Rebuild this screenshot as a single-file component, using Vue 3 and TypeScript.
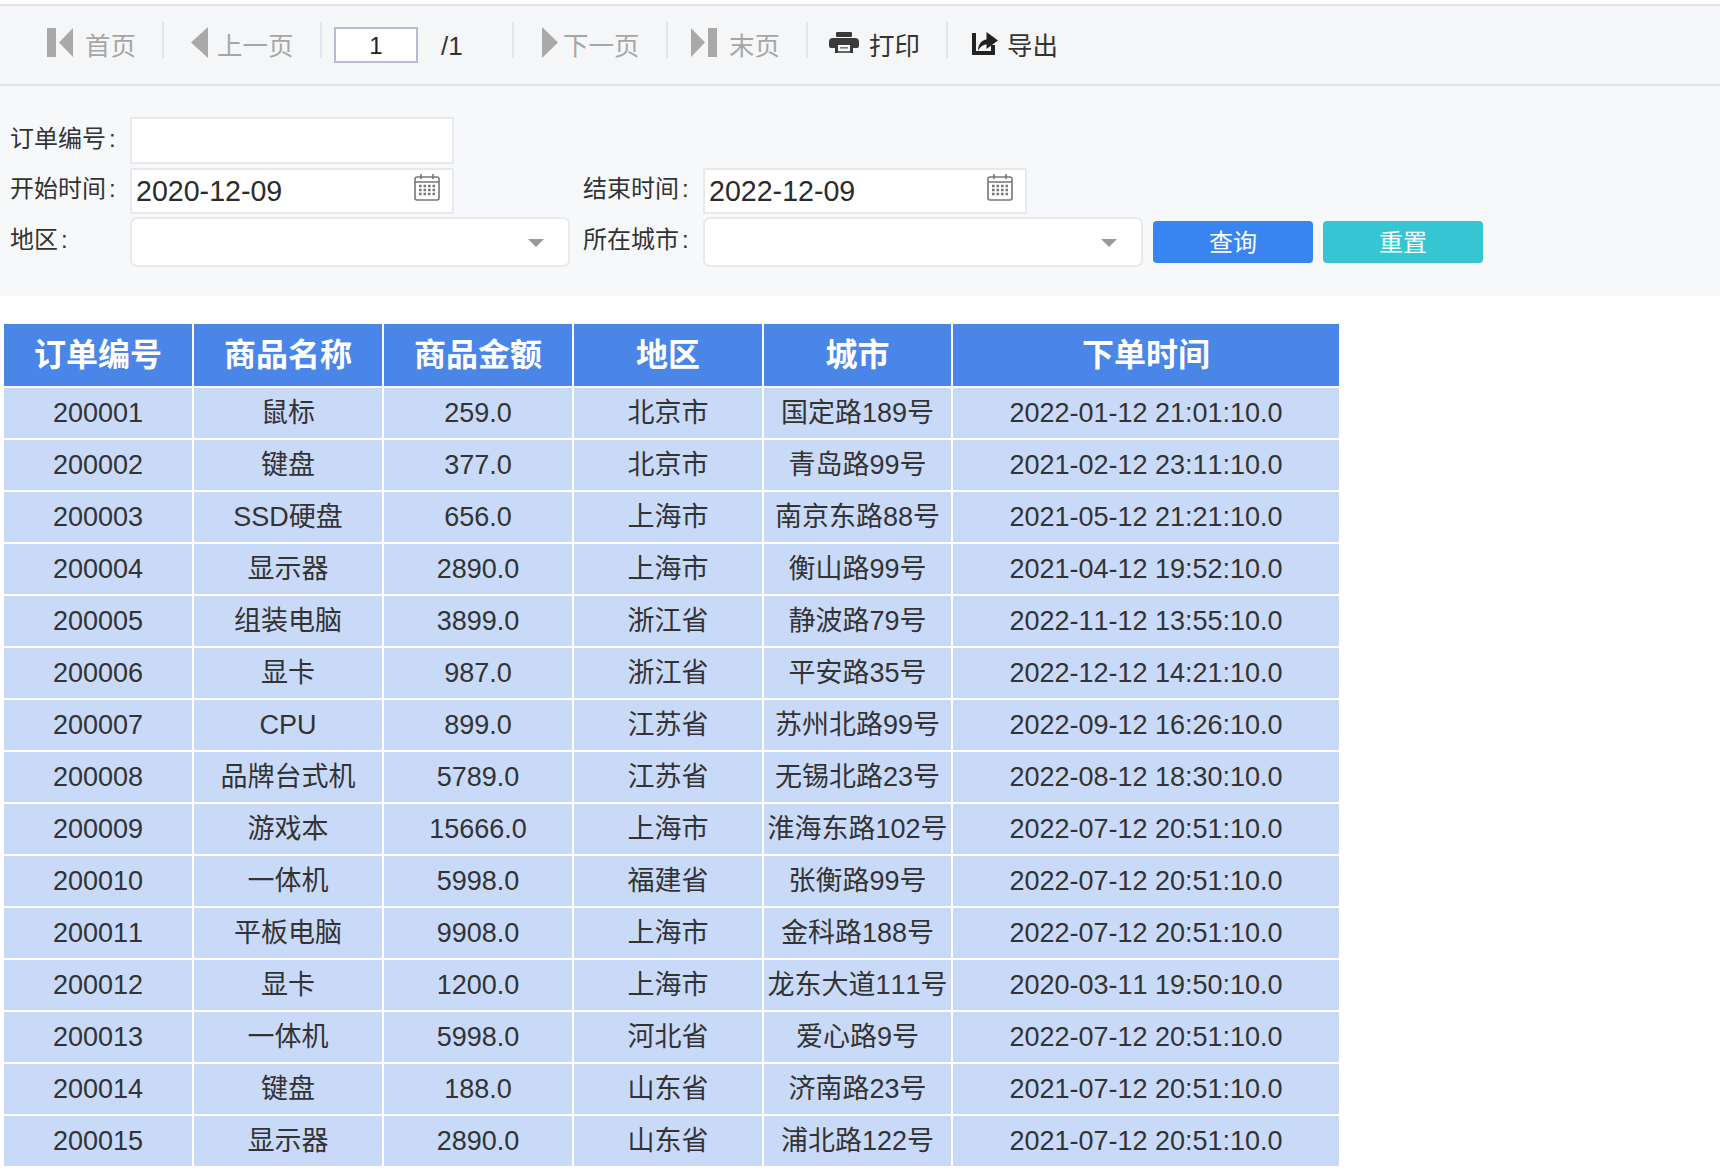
<script setup lang="ts">
interface Row { id: string; name: string; amount: string; region: string; city: string; time: string }
const headers: string[] = ['订单编号', '商品名称', '商品金额', '地区', '城市', '下单时间']
const rows: Row[] = [
  { id: '200001', name: '鼠标', amount: '259.0', region: '北京市', city: '国定路189号', time: '2022-01-12 21:01:10.0' },
  { id: '200002', name: '键盘', amount: '377.0', region: '北京市', city: '青岛路99号', time: '2021-02-12 23:11:10.0' },
  { id: '200003', name: 'SSD硬盘', amount: '656.0', region: '上海市', city: '南京东路88号', time: '2021-05-12 21:21:10.0' },
  { id: '200004', name: '显示器', amount: '2890.0', region: '上海市', city: '衡山路99号', time: '2021-04-12 19:52:10.0' },
  { id: '200005', name: '组装电脑', amount: '3899.0', region: '浙江省', city: '静波路79号', time: '2022-11-12 13:55:10.0' },
  { id: '200006', name: '显卡', amount: '987.0', region: '浙江省', city: '平安路35号', time: '2022-12-12 14:21:10.0' },
  { id: '200007', name: 'CPU', amount: '899.0', region: '江苏省', city: '苏州北路99号', time: '2022-09-12 16:26:10.0' },
  { id: '200008', name: '品牌台式机', amount: '5789.0', region: '江苏省', city: '无锡北路23号', time: '2022-08-12 18:30:10.0' },
  { id: '200009', name: '游戏本', amount: '15666.0', region: '上海市', city: '淮海东路102号', time: '2022-07-12 20:51:10.0' },
  { id: '200010', name: '一体机', amount: '5998.0', region: '福建省', city: '张衡路99号', time: '2022-07-12 20:51:10.0' },
  { id: '200011', name: '平板电脑', amount: '9908.0', region: '上海市', city: '金科路188号', time: '2022-07-12 20:51:10.0' },
  { id: '200012', name: '显卡', amount: '1200.0', region: '上海市', city: '龙东大道111号', time: '2020-03-11 19:50:10.0' },
  { id: '200013', name: '一体机', amount: '5998.0', region: '河北省', city: '爱心路9号', time: '2022-07-12 20:51:10.0' },
  { id: '200014', name: '键盘', amount: '188.0', region: '山东省', city: '济南路23号', time: '2021-07-12 20:51:10.0' },
  { id: '200015', name: '显示器', amount: '2890.0', region: '山东省', city: '浦北路122号', time: '2021-07-12 20:51:10.0' },
]
</script>

<template>
  <div class="page">
    <div class="toolbar">
      <div class="seg seg0">
        <svg class="ico" width="27" height="29" viewBox="0 0 27 29"><rect x="0" y="0" width="9" height="29" fill="#a9a9a9" /><path d="M26 0V29L12 14.5Z" fill="#a9a9a9" /></svg>
        <span class="off">首页</span>
      </div>
      <i class="sep"></i>
      <div class="seg seg1">
        <svg class="ico" width="17" height="31" viewBox="0 0 17 31"><path d="M17 0V31L0 15.5Z" fill="#a9a9a9" /></svg>
        <span class="off">上一页</span>
      </div>
      <i class="sep"></i>
      <div class="seg seg2">
        <div class="pageno">1</div>
        <span class="total">/1</span>
      </div>
      <i class="sep"></i>
      <div class="seg seg3">
        <svg class="ico" width="16" height="31" viewBox="0 0 16 31"><path d="M0 0V31L16 15.5Z" fill="#a9a9a9" /></svg>
        <span class="off">下一页</span>
      </div>
      <i class="sep"></i>
      <div class="seg seg4">
        <svg class="ico" width="26" height="29" viewBox="0 0 26 29"><path d="M0 0V29L14 14.5Z" fill="#a9a9a9" /><rect x="17" y="0" width="9" height="29" fill="#a9a9a9" /></svg>
        <span class="off">末页</span>
      </div>
      <i class="sep"></i>
      <div class="seg seg5">
        <svg class="ico" width="30" height="22" viewBox="0 0 30 22"><rect x="7" y="0" width="16" height="5" rx="1" fill="#3a3a3a" /><path d="M4 6H26Q30 6 30 10V14Q30 16 28 16H24V21H21V13H9V21H6V16H2Q0 16 0 14V10Q0 6 4 6Z" fill="#3a3a3a" /><rect x="11" y="15" width="8" height="1.6" fill="#777" /><rect x="9" y="19" width="12" height="2" fill="#666" /></svg>
        <span class="on">打印</span>
      </div>
      <i class="sep"></i>
      <div class="seg seg6">
        <svg class="ico" width="26" height="24" viewBox="0 0 26 24"><path d="M0 2H4V20H19V14H23V24H0Z" fill="#222" /><path d="M6 20C6 13 10 9 14.5 8.5V1L26 9.5L14.5 18V13.5C11 13.5 8 16 6 20Z" fill="#222" /></svg>
        <span class="on">导出</span>
      </div>
    </div>

    <div class="form">
      <div class="frow r1">
        <label class="lbl">订单编号<b class="colon">:</b></label>
        <div class="box"></div>
      </div>
      <div class="frow r2">
        <label class="lbl">开始时间<b class="colon">:</b></label>
        <div class="box date">
          <span>2020-12-09</span>
          <svg width="26" height="28" viewBox="0 0 26 28" fill="none"><rect x="1" y="4" width="24" height="23" rx="2" stroke="#777" stroke-width="1.6" /><path d="M1 9H25M7 1V6M19 1V6" stroke="#777" stroke-width="1.6" /><path d="M5 13h16M5 17h16M5 21h16" stroke="#777" stroke-width="2.4" stroke-dasharray="2.6 1.9" /></svg>
        </div>
        <label class="lbl second">结束时间<b class="colon">:</b></label>
        <div class="box date">
          <span>2022-12-09</span>
          <svg width="26" height="28" viewBox="0 0 26 28" fill="none"><rect x="1" y="4" width="24" height="23" rx="2" stroke="#777" stroke-width="1.6" /><path d="M1 9H25M7 1V6M19 1V6" stroke="#777" stroke-width="1.6" /><path d="M5 13h16M5 17h16M5 21h16" stroke="#777" stroke-width="2.4" stroke-dasharray="2.6 1.9" /></svg>
        </div>
      </div>
      <div class="frow r3">
        <label class="lbl">地区<b class="colon">:</b></label>
        <div class="select"><i class="arrow"></i></div>
        <label class="lbl third">所在城市<b class="colon">:</b></label>
        <div class="select"><i class="arrow"></i></div>
        <button class="btn blue">查询</button>
        <button class="btn teal">重置</button>
      </div>
    </div>

    <div class="table">
      <div v-for="h in headers" :key="h" class="th">{{ h }}</div>
      <template v-for="r in rows" :key="r.id">
        <div class="td">{{ r.id }}</div>
        <div class="td">{{ r.name }}</div>
        <div class="td">{{ r.amount }}</div>
        <div class="td">{{ r.region }}</div>
        <div class="td">{{ r.city }}</div>
        <div class="td">{{ r.time }}</div>
      </template>
    </div>
  </div>
</template>

<style scoped>
.page {
  width: 1720px;
  height: 1174px;
  background: #fff;
  overflow: hidden;
  padding-top: 4px;
  box-sizing: border-box;
  font-family: "Liberation Sans", "Noto Sans CJK SC", sans-serif;
  font-kerning: none;
  color: #333;
}
.toolbar {
  display: flex;
  align-items: center;
  height: 82px;
  box-sizing: border-box;
  background: #f5f6f8;
  border-top: 2px solid #e2e3e6;
  border-bottom: 2px solid #e2e3e6;
  font-size: 25.5px;
  line-height: 30px;
}
.seg {
  display: flex;
  align-items: center;
  box-sizing: border-box;
  height: 100%;
  flex: none;
}
.ico { flex: none; margin-bottom: 5px; }
.sep {
  flex: none;
  width: 2px;
  height: 36px;
  background: #e3e4e7;
  align-self: flex-start;
  margin-top: 16px;
}
.seg0 { width: 162px; padding-left: 47px; gap: 11px; }
.seg1 { width: 156px; padding-left: 27px; gap: 9px; }
.seg2 { width: 190px; padding-left: 12px; gap: 23px; }
.seg3 { width: 152px; padding-left: 28px; gap: 5px; }
.seg4 { width: 138px; padding-left: 23px; gap: 12px; }
.seg5 { width: 138px; padding-left: 21px; gap: 10px; }
.seg6 { padding-left: 24px; gap: 9px; }
.off { color: #a6a6a6; margin-top: 2px; }
.on { color: #333; margin-top: 2px; }
.pageno {
  width: 84px;
  height: 36px;
  box-sizing: border-box;
  border: 2px solid #b7bbd0;
  background: #fff;
  font-size: 24px;
  line-height: 34px;
  text-align: center;
  color: #222;
}
.total { font-size: 26px; color: #333; margin-top: 2px; }

.form {
  height: 210px;
  box-sizing: border-box;
  background: #f7f8fa;
  padding: 31px 0 0 10px;
  display: flex;
  flex-direction: column;
}
.frow { display: flex; align-items: flex-start; }
.r1 { height: 47px; margin-bottom: 4px; }
.r2 { height: 46px; margin-bottom: 3px; }
.r3 { height: 50px; }
.lbl {
  flex: none;
  width: 120px;
  font-size: 24px;
  line-height: 44px;
  color: #333;
  white-space: nowrap;
}
.r2 .lbl { line-height: 42px; }
.r3 .lbl { line-height: 45px; }
.colon { font-weight: 400; margin-left: 3px; }
.second { margin-left: 129px; }
.third { margin-left: 13px; }
.box {
  flex: none;
  width: 324px;
  height: 100%;
  box-sizing: border-box;
  border: 2px solid #e8e9ec;
  background: #fff;
}
.date {
  display: flex;
  align-items: center;
  justify-content: space-between;
  padding: 0 12px 0 4px;
  font-size: 28.6px;
  color: #2b2b2b;
}
.date svg { margin-bottom: 8px; }
.select {
  flex: none;
  position: relative;
  width: 440px;
  height: 50px;
  box-sizing: border-box;
  border: 2px solid #e8e9ec;
  border-radius: 7px;
  background: #fff;
}
.arrow {
  position: absolute;
  right: 24px;
  top: 20px;
  width: 0;
  height: 0;
  border-left: 8px solid transparent;
  border-right: 8px solid transparent;
  border-top: 8px solid #999;
}
.btn {
  flex: none;
  width: 160px;
  height: 42px;
  margin: 4px 0 0 10px;
  border: none;
  border-radius: 4px;
  color: #fff;
  font-family: inherit;
  font-kerning: none;
  font-size: 24px;
  line-height: 44px;
  padding: 0;
}
.blue { background: #3885f2; }
.teal { background: #36c6d3; }

.table {
  display: grid;
  grid-template-columns: repeat(4, 188px) 187px 386px;
  grid-template-rows: 62px repeat(15, 50px);
  gap: 2px;
  width: 1335px;
  margin: 28px 0 0 4px;
}
.th, .td {
  display: flex;
  align-items: center;
  justify-content: center;
  white-space: nowrap;
}
.th {
  background: #4a86e8;
  color: #fff;
  font-size: 32px;
  line-height: 40px;
  font-weight: 700;
}
.td {
  background: #c9daf8;
  color: #333;
  font-size: 27px;
  line-height: 32px;
}
</style>
